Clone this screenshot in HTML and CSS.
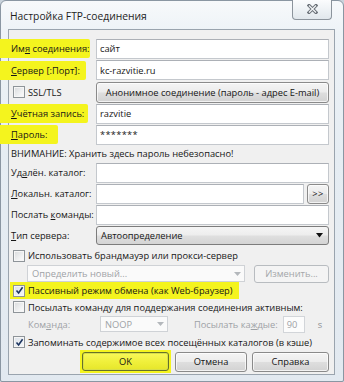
FILE: index.html
```html
<!DOCTYPE html>
<html lang="ru">
<head>
<meta charset="utf-8">
<title>Настройка FTP-соединения</title>
<link rel="stylesheet" href="styles.css">
</head>
<body>
<div class="window">
  <div class="titlebar">
    <span class="title">Настройка FTP-соединения</span>
    <div class="close">
      <svg width="11" height="10" viewBox="0 0 11 10"><path d="M2 1.5 L9 8.5 M9 1.5 L2 8.5" stroke="#6b7178" stroke-width="3.2" stroke-linecap="square" fill="none"/><path d="M2 1.5 L9 8.5 M9 1.5 L2 8.5" stroke="#f4f6f8" stroke-width="1.2" fill="none"/></svg>
    </div>
  </div>
  <div class="client">
    <div class="row r21">
      <div class="lbl"><span class="hl w90">Им<u>я</u> соединения:</span></div>
      <div class="input">сайт</div>
    </div>
    <div class="row r22">
      <div class="lbl"><span class="hl w85"><u>С</u>ервер [:Порт]:</span></div>
      <div class="input">kc-razvitie.ru</div>
    </div>
    <div class="row r22">
      <div class="lbl"><span class="cb"></span><span class="cbtext">SSL/TLS</span></div>
      <div class="btn grow">Анонимное соединение (пароль - адрес E-mail)</div>
    </div>
    <div class="row r21">
      <div class="lbl"><span class="hl w88"><u>У</u>чётная запись:</span></div>
      <div class="input">razvitie</div>
    </div>
    <div class="row r21">
      <div class="lbl"><span class="hl w58"><u>П</u>ароль:</span></div>
      <div class="input pw">*******</div>
    </div>
    <div class="row r17">
      <span class="warn">ВНИМАНИЕ: Хранить здесь пароль небезопасно!</span>
    </div>
    <div class="row r21">
      <div class="lbl"><span>Уд<u>а</u>лён. каталог:</span></div>
      <div class="input"></div>
    </div>
    <div class="row r21">
      <div class="lbl"><span><u>Л</u>окальн. каталог:</span></div>
      <div class="input"></div>
      <div class="btn small">&gt;&gt;</div>
    </div>
    <div class="row r21">
      <div class="lbl"><span>Послать <u>к</u>оманды:</span></div>
      <div class="input"></div>
    </div>
    <div class="row r21">
      <div class="lbl"><span><u>Т</u>ип сервера:</span></div>
      <div class="combo">
        <span>Автоопределение</span>
        <svg width="8" height="5" viewBox="0 0 8 5"><path d="M0 0 H7 L3.5 4.5 Z" fill="#111"/></svg>
      </div>
    </div>
    <div class="row r19 cbrow">
      <span class="cb"></span><span class="cbtext">Использовать брандмауэр или прокси-сервер</span>
    </div>
    <div class="row r17 indent">
      <div class="dcombo wide"><span>Определить новый...</span>
        <svg width="7" height="4" viewBox="0 0 7 4"><path d="M0 0 H7 L3.5 4 Z" fill="#b4b8bc"/></svg>
      </div>
      <div class="btn disabled change">Изменить...</div>
    </div>
    <div class="row r17 cbrow">
      <span class="hlrow"><span class="cb on"><svg width="9" height="9" viewBox="0 0 9 9"><path d="M1.5 4.5 L3.6 7 L7.6 1.2" stroke="#1d3560" stroke-width="1.6" fill="none"/></svg></span><span class="cbtext">Пассивный режим обмена (как Web-браузер)</span></span>
    </div>
    <div class="row r16 cbrow">
      <span class="cb"></span><span class="cbtext">Посылать команду для поддержания соединения активным:</span>
    </div>
    <div class="row r18 keep">
      <span class="dlabel cmd">Ком<u>а</u>нда:</span>
      <div class="dcombo noop"><span>NOOP</span>
        <svg width="7" height="4" viewBox="0 0 7 4"><path d="M0 0 H7 L3.5 4 Z" fill="#b4b8bc"/></svg>
      </div>
      <span class="dlabel every">Посылать ка<u>ж</u>дые:</span>
      <div class="dinput">90</div>
      <span class="dlabel sec">s</span>
    </div>
    <div class="row r18 cbrow">
      <span class="cb on"><svg width="9" height="9" viewBox="0 0 9 9"><path d="M1.5 4.5 L3.6 7 L7.6 1.2" stroke="#1d3560" stroke-width="1.6" fill="none"/></svg></span><span class="cbtext">Запоминать содержимое всех посещённых каталогов (в кэше)</span>
    </div>
    <div class="row r21 buttons">
      <span class="okwrap"><span class="btn ok">OK</span></span>
      <span class="btn act">Отмена</span>
      <span class="btn act help">Справка</span>
    </div>
  </div>
</div>
</body>
</html>
```
FILE: styles.css
```css
* { box-sizing: border-box; }
html, body { margin: 0; padding: 0; }
body {
  width: 344px;
  height: 382px;
  overflow: hidden;
  background: #c9d3dc;
  font-family: "Open Sans", "Noto Sans", sans-serif;
  font-size: 9.3px;
  color: #161616;
}
u { text-decoration: underline; text-underline-offset: 1px; }
.window {
  width: 344px;
  height: 382px;
  display: flex;
  flex-direction: column;
  border: 1px solid #8a96a2;
  border-radius: 6px 6px 2px 2px;
  padding: 0 8px 6px 7px;
  background: linear-gradient(180deg, #f7f9fb 0%, #eef3f7 8%, #e6edf3 40%, #e2e9f0 100%);
}
.titlebar {
  height: 28px;
  flex: none;
  display: flex;
  align-items: flex-start;
}
.title {
  margin: 8px 0 0 2px;
  font-size: 10.3px;
  line-height: 14px;
  color: #1e1e1e;
}
.close {
  margin: -1px 3px 0 auto;
  width: 40px;
  height: 20px;
  border: 1px solid #8c949c;
  border-top: none;
  border-radius: 0 0 4px 4px;
  background: linear-gradient(180deg, #fbfcfd 0%, #eef2f5 50%, #e1e7ec 100%);
  display: flex;
  align-items: center;
  justify-content: center;
  padding-bottom: 1px;
}
.client {
  flex: 1;
  background: #f0f0f0;
  border: 1px solid #9aa4ae;
  padding: 8px 5px 0 2px;
  display: flex;
  flex-direction: column;
}
.row { display: flex; align-items: center; flex: none; }
.r16 { height: 16px; }
.r17 { height: 17px; }
.r18 { height: 18px; }
.r19 { height: 19px; }
.r21 { height: 21px; }
.r22 { height: 22px; }
.lbl {
  width: 85px;
  flex: none;
  display: flex;
  align-items: center;
  white-space: nowrap;
}
.hl {
  background: #f4f41e;
  margin-left: -11px;
  padding: 3px 0 3px 11px;
  border-radius: 0 2px 2px 0;
}
.w90 { width: 90px; }
.w85 { width: 86px; }
.w88 { width: 88px; }
.w58 { width: 58px; }
.input {
  flex: 1;
  height: 20px;
  background: #fff;
  border: 1px solid #c4c8cd;
  border-top-color: #acb0b6;
  padding: 0 3px;
  display: flex;
  align-items: center;
  white-space: nowrap;
}
.pw { align-items: flex-start; padding-top: 2px; letter-spacing: 0.3px; }
.btn {
  height: 21px;
  border: 1px solid #8a8a8a;
  border-radius: 3px;
  background: linear-gradient(180deg, #f4f4f4 0%, #ececec 48%, #dedede 52%, #d2d2d2 100%);
  box-shadow: inset 0 0 0 1px rgba(255,255,255,0.7);
  display: flex;
  align-items: center;
  justify-content: center;
  white-space: nowrap;
  color: #151515;
}
.grow { flex: 1; }
.small { width: 22px; margin-left: 3px; height: 20px; letter-spacing: 0.5px; }
.cb {
  width: 12px;
  height: 12px;
  flex: none;
  margin-left: 2px;
  border: 1px solid #8e9499;
  background: linear-gradient(135deg, #d8dadc 0%, #f3f4f5 70%, #fbfbfb 100%);
  box-shadow: inset 0 0 0 1px #f6f6f6;
  display: flex;
  align-items: center;
  justify-content: center;
}
.cb.on { background: linear-gradient(135deg, #dde3ea 0%, #f5f7f9 100%); }
.cbtext { margin-left: 3px; white-space: nowrap; }
.warn { white-space: nowrap; }
.combo {
  flex: 1;
  height: 19px;
  border: 1px solid #7c7c7c;
  border-radius: 3px;
  background: linear-gradient(180deg, #f5f5f5 0%, #ededed 48%, #dfdfdf 52%, #d4d4d4 100%);
  display: flex;
  align-items: center;
  justify-content: space-between;
  padding: 0 4px 0 4px;
}
.indent { padding-left: 16px; }
.dcombo {
  height: 17px;
  border: 1px solid #cfd2d6;
  background: #fafafa;
  color: #9ea2a6;
  display: flex;
  align-items: center;
  justify-content: space-between;
  padding: 0 3px 0 4px;
}
.wide { width: 218px; }
.btn.disabled {
  color: #a3a6a9;
  border-color: #b8bcc0;
  background: #f4f4f4;
  box-shadow: none;
}
.change { height: 18px; margin-left: auto; width: 75px; }
.keep { padding-left: 17px; }
.dlabel { color: #9ea2a6; white-space: nowrap; }
.cmd { width: 72px; }
.noop { width: 68px; height: 16px; }
.every { margin-left: 26px; }
.dinput {
  width: 22px;
  height: 17px;
  margin-left: 5px;
  border: 1px solid #d2d5d9;
  background: #fcfcfc;
  color: #9ea2a6;
  padding: 0 3px;
  display: flex;
  align-items: center;
}
.sec { margin-left: 13px; color: #8d9196; }
.hlrow {
  display: flex;
  align-items: center;
  background: #f4f41e;
  margin-left: -1px;
  padding: 2px 6px 2px 1px;
  height: 17px;
}
.buttons { justify-content: flex-end; gap: 4px; }
.okwrap {
  background: #f4f41e;
  padding: 2px;
  margin-right: 0;
}
.btn.ok {
  width: 87px;
  height: 19px;
  border: 1px solid #66702a;
  background: linear-gradient(180deg, #f8f85a 0%, #f0f03c 50%, #e6e62a 100%);
  box-shadow: inset 0 0 0 1px #d8de48;
}
.act { width: 72px; height: 20px; }
.help { width: 77px; margin-left: 1px; }
```
